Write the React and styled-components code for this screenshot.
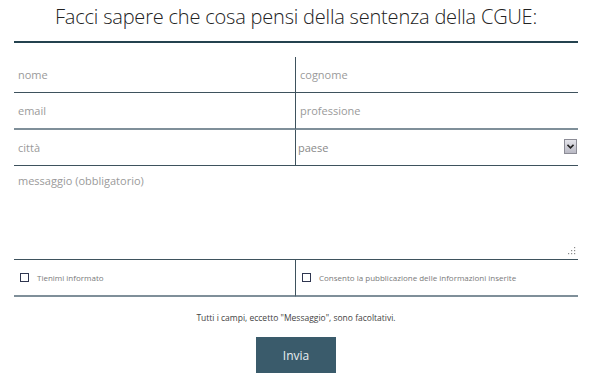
import styled, { createGlobalStyle } from "styled-components";

const Global = createGlobalStyle`
  body {
    margin: 0;
    background: #fff;
    font-family: "Open Sans", "Liberation Sans", sans-serif;
  }
`;

const Page = styled.main`
  width: 564px;
  margin: 0 0 0 14px;
`;

const Title = styled.h2`
  margin: 0;
  padding-top: 2px;
  height: 39px;
  text-align: center;
  font-size: 20px;
  letter-spacing: -0.2px;
  font-weight: 300;
  color: #222;
  line-height: 30px;
  border-bottom: 2px solid #24424f;
`;

const Fields = styled.div`
  margin-top: 14px;
  display: grid;
  grid-template-columns: 281px 283px;
`;

// $light rows have the softer, doubled rule seen under "email" and the checkboxes
const Cell = styled.div`
  position: relative;
  height: 35px;
  border-bottom: ${(p) => (p.$light ? "2px solid #7f8f99" : "1px solid #3e525d")};
  border-left: ${(p) => (p.$right ? "1px solid #3e525d" : "none")};
  display: flex;
  align-items: center;
`;

const Input = styled.input`
  width: 100%;
  border: 0;
  outline: 0;
  padding: 0 0 0 4px;
  font-family: inherit;
  font-size: 11px;
  color: #333;
  background: transparent;
  &::placeholder {
    color: #9a9a9a;
  }
`;

const Select = styled.select`
  appearance: none;
  width: 100%;
  height: 100%;
  border: 0;
  outline: 0;
  padding: 0 0 0 2px;
  font-family: inherit;
  font-size: 11px;
  color: #8a8a8a;
  background: transparent;
`;

const Arrow = styled.span`
  position: absolute;
  right: 1px;
  top: 9px;
  width: 11px;
  height: 13px;
  border: 1px solid #8c8c96;
  background: linear-gradient(#e4e4ea, #b9b9c4);
  display: flex;
  align-items: center;
  justify-content: center;
  pointer-events: none;
`;

const MessageCell = styled.div`
  position: relative;
  grid-column: 1 / 3;
  height: 93px;
  border-bottom: 1px solid #3e525d;
`;

const Message = styled.textarea`
  display: block;
  width: 100%;
  height: 100%;
  box-sizing: border-box;
  border: 0;
  outline: 0;
  resize: none;
  padding: 7px 4px;
  font-family: inherit;
  font-size: 11px;
  &::placeholder {
    color: #9a9a9a;
  }
`;

const Grip = styled.svg`
  position: absolute;
  right: 2px;
  bottom: 4px;
`;

const Check = styled.label`
  display: flex;
  align-items: center;
  gap: 8px;
  padding-left: ${(p) => p.$pad}px;
  font-size: 8px;
  color: #7a7a7a;
`;

const Box = styled.input`
  appearance: none;
  margin: 0;
  width: 9px;
  height: 9px;
  border: 1px solid #2f3650;
  background: #fff;
`;

const Note = styled.p`
  margin: 15px 0 0;
  text-align: center;
  font-size: 8.5px;
  color: #444;
`;

const Send = styled.button`
  display: block;
  margin: 14px auto 0;
  width: 80px;
  height: 36px;
  border: 0;
  background: #3a5b6b;
  color: #e8eef2;
  font-family: inherit;
  font-size: 12px;
`;

export default function App() {
  return (
    <Page>
      <Global />
      <Title>Facci sapere che cosa pensi della sentenza della CGUE:</Title>
      <Fields>
        <Cell>
          <Input placeholder="nome" />
        </Cell>
        <Cell $right>
          <Input placeholder="cognome" />
        </Cell>
        <Cell $light>
          <Input placeholder="email" />
        </Cell>
        <Cell $right $light>
          <Input placeholder="professione" />
        </Cell>
        <Cell>
          <Input placeholder="città" />
        </Cell>
        <Cell $right>
          <Select defaultValue="">
            <option value="">paese</option>
          </Select>
          <Arrow>
            <svg width="7" height="5" viewBox="0 0 7 5">
              <path d="M0.5 0.8 L3.5 3.8 L6.5 0.8" fill="none" stroke="#222" strokeWidth="1.6" />
            </svg>
          </Arrow>
        </Cell>
        <MessageCell>
          <Message placeholder="messaggio (obbligatorio)" />
          <Grip width="8" height="8" viewBox="0 0 8 8">
            <g fill="#8a8a8a">
              <rect x="6" y="0" width="1.2" height="1.2" />
              <rect x="3" y="3" width="1.2" height="1.2" />
              <rect x="6" y="3" width="1.2" height="1.2" />
              <rect x="0" y="6" width="1.2" height="1.2" />
              <rect x="3" y="6" width="1.2" height="1.2" />
              <rect x="6" y="6" width="1.2" height="1.2" />
            </g>
          </Grip>
        </MessageCell>
        <Cell $light>
          <Check $pad={6}>
            <Box type="checkbox" />
            Tienimi informato
          </Check>
        </Cell>
        <Cell $right $light>
          <Check $pad={6}>
            <Box type="checkbox" />
            Consento la pubblicazione delle informazioni inserite
          </Check>
        </Cell>
      </Fields>
      <Note>Tutti i campi, eccetto "Messaggio", sono facoltativi.</Note>
      <Send>Invia</Send>
    </Page>
  );
}
